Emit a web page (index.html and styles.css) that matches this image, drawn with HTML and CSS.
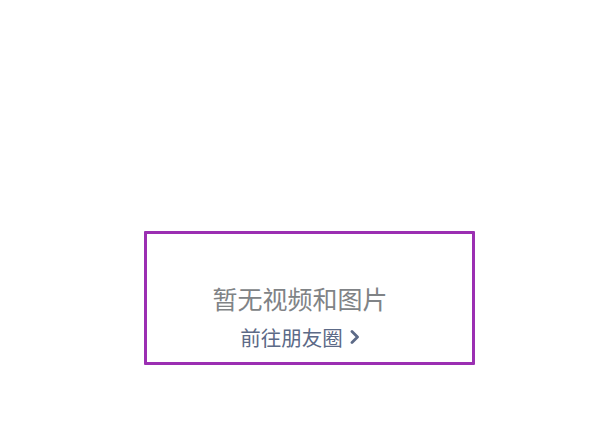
FILE: index.html
```html
<!DOCTYPE html>
<html lang="zh">
<head>
<meta charset="utf-8">
<link rel="stylesheet" href="styles.css">
</head>
<body>
<div class="page">
  <div class="empty">
    <div class="title">暂无视频和图片</div>
    <a class="link">前往朋友圈<svg class="chev" viewBox="0 0 10 14" width="10" height="14"><path d="M2 1.5 L7.5 7 L2 12.5" fill="none" stroke="#5c6a87" stroke-width="2.8" stroke-linecap="round" stroke-linejoin="round"/></svg></a>
  </div>
  <div class="highlight"></div>
</div>
</body>
</html>
```
FILE: styles.css
```css
html, body {
  margin: 0;
  padding: 0;
  background: #ffffff;
}
.page {
  position: relative;
  width: 600px;
  height: 421px;
  font-family: "Noto Sans CJK SC", "Noto Sans", sans-serif;
}
.empty {
  display: flex;
  flex-direction: column;
  align-items: center;
  padding-top: 283px;
}
.title {
  font-size: 25px;
  line-height: 30px;
  color: #808386;
}
.link {
  display: flex;
  align-items: center;
  gap: 7px;
  margin-top: 12px;
  font-size: 20.5px;
  line-height: 24px;
  color: #5c6a87;
}
.chev {
  display: block;
}
.highlight {
  position: absolute;
  left: 144px;
  top: 231px;
  width: 325px;
  height: 128px;
  border: 3px solid #9b2fb2;
  border-radius: 1px;
}
```
